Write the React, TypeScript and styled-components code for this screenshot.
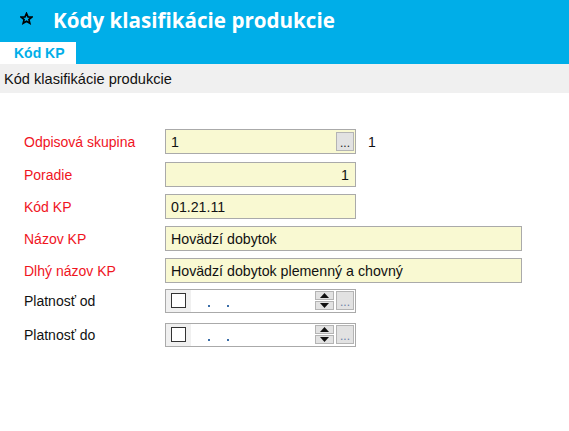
import React from "react";
import styled, { createGlobalStyle } from "styled-components";

const Global = createGlobalStyle`
  html, body { margin: 0; padding: 0; background: #fff; }
  body { font-family: "Liberation Sans", Arial, sans-serif; }
`;

const Page = styled.div`
  width: 569px;
  height: 431px;
  overflow: hidden;
  background: #fff;
`;

const Header = styled.div`
  background: #00aee8;
  height: 64px;
  display: flex;
  flex-direction: column;
`;

const TitleRow = styled.div`
  height: 42px;
  display: flex;
  align-items: center;
  padding-left: 20px;
`;

const Star = styled.svg`
  width: 13px;
  height: 13px;
  margin-top: -6px;
  margin-right: 20px;
`;

const Title = styled.h1`
  margin: 0;
  margin-top: -3px;
  color: #fff;
  font-family: "Open Sans", "Liberation Sans", sans-serif;
  font-weight: 700;
  font-size: 20.6px;
`;

const Tabs = styled.div`
  display: flex;
  height: 22px;
`;

const Tab = styled.div`
  background: #fff;
  color: #00aee8;
  font-weight: 700;
  font-size: 14px;
  width: 76px;
  padding-left: 14px;
  box-sizing: border-box;
  display: flex;
  align-items: center;
`;

const SectionBar = styled.div`
  background: #f0f0f0;
  height: 29px;
  display: flex;
  align-items: center;
  padding-left: 4px;
  font-size: 14.6px;
  color: #111;
`;

const Form = styled.div`
  padding: 36px 0 0 24px;
  display: flex;
  flex-direction: column;
`;

const Row = styled.div<{ $gap: number }>`
  display: flex;
  align-items: center;
  height: 25px;
  margin-bottom: ${(p) => p.$gap}px;
`;

const Label = styled.div<{ $required?: boolean }>`
  width: 141px;
  font-size: 14px;
  color: ${(p) => (p.$required ? "#f0141e" : "#111")};
`;

const Field = styled.div<{ $w: number; $right?: boolean }>`
  width: ${(p) => p.$w}px;
  height: 25px;
  box-sizing: border-box;
  border: 1px solid #aaaaaa;
  background: #f9f9d2;
  display: flex;
  align-items: center;
  justify-content: ${(p) => (p.$right ? "flex-end" : "flex-start")};
  padding: 0 ${(p) => (p.$right ? "6px" : "5px")};
  font-size: 14.2px;
  color: #111;
`;

const Value = styled.span`
  flex: 1;
`;

const DotsButton = styled.div`
  width: 18px;
  height: 19px;
  box-sizing: border-box;
  border: 1px solid #b4b4b4;
  background: #e2e2e2;
  display: flex;
  align-items: flex-end;
  justify-content: center;
  font-size: 12px;
  line-height: 14px;
  color: #222;
  margin-right: -4px;
`;

const SideValue = styled.div`
  margin-left: 12px;
  font-size: 14px;
  color: #111;
`;

const DateField = styled.div`
  width: 191px;
  height: 24px;
  box-sizing: border-box;
  border: 1px solid #aaaaaa;
  background: #fff;
  display: flex;
  align-items: center;
`;

const CheckArea = styled.div`
  width: 25px;
  height: 22px;
  background: #f0f0f0;
  display: flex;
  align-items: center;
  justify-content: center;
`;

const Check = styled.div`
  width: 15px;
  height: 15px;
  box-sizing: border-box;
  border: 1px solid #333;
  background: #fff;
`;

const DateText = styled.div`
  flex: 1;
  display: flex;
  gap: 17px;
  padding-left: 17px;
  align-items: flex-end;
  height: 100%;
  padding-bottom: 5px;
  box-sizing: border-box;
`;

const Dot = styled.span`
  width: 2px;
  height: 2px;
  background: #3b6ea8;
`;

const Spinner = styled.div`
  width: 19px;
  height: 19px;
  display: flex;
  flex-direction: column;
  gap: 1px;
  margin-right: 2px;
`;

const SpinBtn = styled.div`
  flex: 1;
  background: #e2e2e2;
  border: 1px solid #b4b4b4;
  display: flex;
  align-items: center;
  justify-content: center;
`;

const DateDots = styled(DotsButton)`
  margin-right: 1px;
  color: #6a7fa8;
`;

const Tri = ({ up }: { up?: boolean }) => (
  <svg width="9" height="5" viewBox="0 0 9 5">
    <path d={up ? "M0 5 L4.5 0 L9 5 Z" : "M0 0 L4.5 5 L9 0 Z"} fill="#111" />
  </svg>
);

const DateInput = () => (
  <DateField>
    <CheckArea>
      <Check />
    </CheckArea>
    <DateText>
      <Dot />
      <Dot />
    </DateText>
    <Spinner>
      <SpinBtn>
        <Tri up />
      </SpinBtn>
      <SpinBtn>
        <Tri />
      </SpinBtn>
    </Spinner>
    <DateDots>...</DateDots>
  </DateField>
);

export default function App() {
  return (
    <Page>
      <Global />
      <Header>
        <TitleRow>
          <Star viewBox="0 0 24 24">
            <path
              d="M12 2.5 L14.8 9 L21.8 9.4 L16.4 13.9 L18.2 20.8 L12 17 L5.8 20.8 L7.6 13.9 L2.2 9.4 L9.2 9 Z"
              fill="none"
              stroke="#000"
              strokeWidth="3"
            />
          </Star>
          <Title>Kódy klasifikácie produkcie</Title>
        </TitleRow>
        <Tabs>
          <Tab>Kód KP</Tab>
        </Tabs>
      </Header>
      <SectionBar>Kód klasifikácie produkcie</SectionBar>
      <Form>
        <Row $gap={8}>
          <Label $required>Odpisová skupina</Label>
          <Field $w={191}>
            <Value>1</Value>
            <DotsButton>...</DotsButton>
          </Field>
          <SideValue>1</SideValue>
        </Row>
        <Row $gap={7}>
          <Label $required>Poradie</Label>
          <Field $w={191} $right>
            1
          </Field>
        </Row>
        <Row $gap={7}>
          <Label $required>Kód KP</Label>
          <Field $w={191}>01.21.11</Field>
        </Row>
        <Row $gap={7}>
          <Label $required>Názov KP</Label>
          <Field $w={357}>Hovädzí dobytok</Field>
        </Row>
        <Row $gap={5}>
          <Label $required>Dlhý názov KP</Label>
          <Field $w={357}>Hovädzí dobytok plemenný a chovný</Field>
        </Row>
        <Row $gap={9}>
          <Label>Platnosť od</Label>
          <DateInput />
        </Row>
        <Row $gap={0}>
          <Label>Platnosť do</Label>
          <DateInput />
        </Row>
      </Form>
    </Page>
  );
}
